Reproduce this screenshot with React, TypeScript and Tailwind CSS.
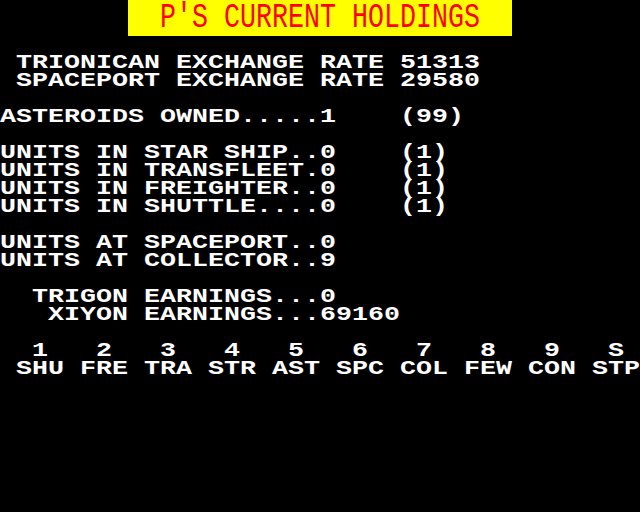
import React from "react";

const lines: string[] = [
  " TRIONICAN EXCHANGE RATE 51313",
  " SPACEPORT EXCHANGE RATE 29580",
  "",
  "ASTEROIDS OWNED.....1    (99)",
  "",
  "UNITS IN STAR SHIP..0    (1)",
  "UNITS IN TRANSFLEET.0    (1)",
  "UNITS IN FREIGHTER..0    (1)",
  "UNITS IN SHUTTLE....0    (1)",
  "",
  "UNITS AT SPACEPORT..0",
  "UNITS AT COLLECTOR..9",
  "",
  "  TRIGON EARNINGS...0",
  "   XIYON EARNINGS...69160",
  "",
  "  1   2   3   4   5   6   7   8   9   S",
  " SHU FRE TRA STR AST SPC COL FEW CON STP",
];

export default function App() {
  return (
    <div className="w-[640px] h-[512px] bg-black overflow-hidden font-['Liberation_Mono','DejaVu_Sans_Mono',monospace]">
      <div className="ml-[128px] w-[384px] h-[36px] bg-[#ffff00]">
        <div className="pl-[32px] h-[36px] overflow-hidden">
          <div className="inline-block -mt-[1px] h-[18px] origin-top-left scale-x-[1.3333] scale-y-[1.8] text-[20px] leading-[18px] whitespace-pre text-[#ff0000]">
            P'S CURRENT HOLDINGS
          </div>
        </div>
      </div>
      <div className="pt-[18px]">
        <div className="w-[480px] origin-top-left scale-x-[1.3333] text-[20px] leading-[18px] font-bold text-white whitespace-pre">
          {lines.map((l, i) => (
            <div key={i} className="h-[18px]">
              {l === "" ? "\u00a0" : l}
            </div>
          ))}
        </div>
      </div>
    </div>
  );
}
